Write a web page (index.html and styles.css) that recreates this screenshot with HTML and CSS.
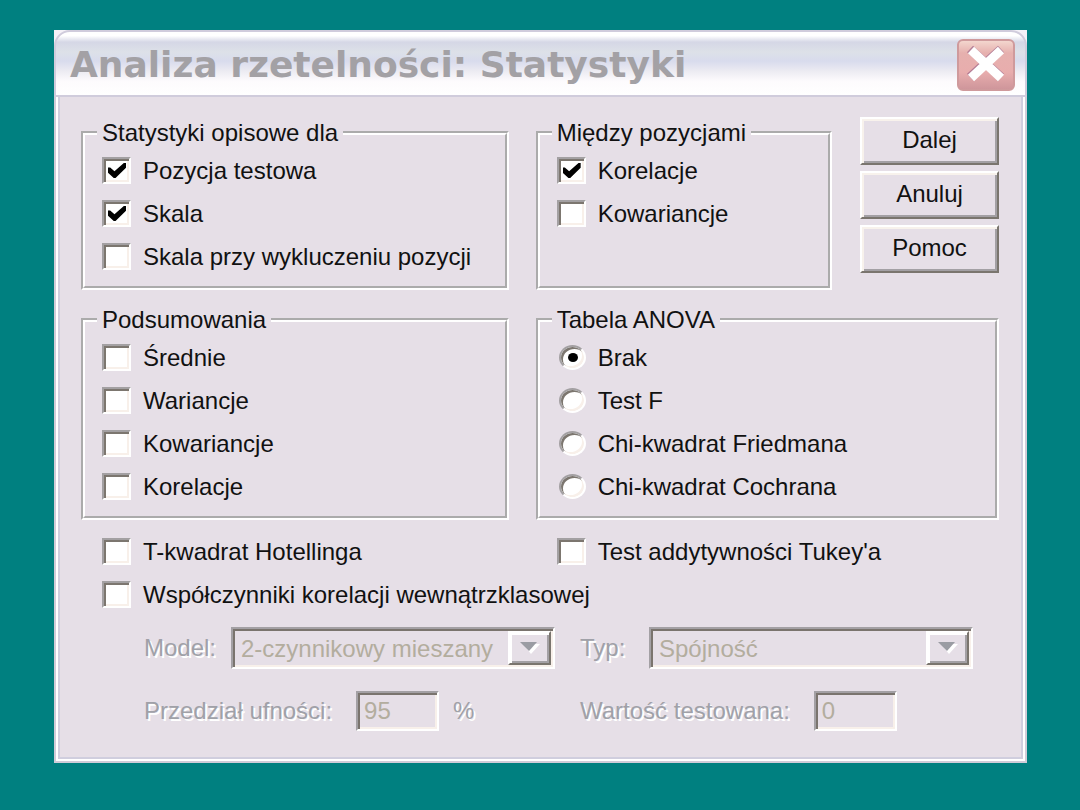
FILE: index.html
```html
<!DOCTYPE html>
<html lang="pl">
<head>
    <meta charset="utf-8">
    <title>Analiza rzetelności: Statystyki</title>
    <link rel="stylesheet" href="styles.css">
</head>
<body>
    <div class="window">
        <div class="titlebar">
            <h1>Analiza rzetelności: Statystyki</h1>
            <button type="button" class="close" aria-label="Zamknij">
                <svg viewBox="0 0 54 48">
                    <path d="M11 8 L42 36 M42 8 L11 36" stroke="#a0688c" stroke-width="9" opacity="0.7"/>
                    <path d="M12 9 L42 37 M42 9 L12 37" stroke="#fff" stroke-width="9"/>
                </svg>
            </button>
        </div>
        <form class="client">
            <div class="groups">
                <fieldset>
                    <legend>Statystyki opisowe dla</legend>
                    <label class="check"><input type="checkbox" checked>Pozycja testowa</label>
                    <label class="check"><input type="checkbox" checked>Skala</label>
                    <label class="check"><input type="checkbox">Skala przy wykluczeniu pozycji</label>
                </fieldset>
                <div class="side">
                    <fieldset>
                        <legend>Między pozycjami</legend>
                        <label class="check"><input type="checkbox" checked>Korelacje</label>
                        <label class="check"><input type="checkbox">Kowariancje</label>
                    </fieldset>
                    <div class="buttons">
                        <button type="button">Dalej</button>
                        <button type="button">Anuluj</button>
                        <button type="button">Pomoc</button>
                    </div>
                </div>
                <fieldset>
                    <legend>Podsumowania</legend>
                    <label class="check"><input type="checkbox">Średnie</label>
                    <label class="check"><input type="checkbox">Wariancje</label>
                    <label class="check"><input type="checkbox">Kowariancje</label>
                    <label class="check"><input type="checkbox">Korelacje</label>
                </fieldset>
                <fieldset>
                    <legend>Tabela ANOVA</legend>
                    <label class="check"><input type="radio" name="anova" checked>Brak</label>
                    <label class="check"><input type="radio" name="anova">Test F</label>
                    <label class="check"><input type="radio" name="anova">Chi-kwadrat Friedmana</label>
                    <label class="check"><input type="radio" name="anova">Chi-kwadrat Cochrana</label>
                </fieldset>
            </div>
            <div class="extra">
                <label class="check"><input type="checkbox">T-kwadrat Hotellinga</label>
                <label class="check"><input type="checkbox">Test addytywności Tukey'a</label>
                <label class="check wide"><input type="checkbox">Współczynniki korelacji wewnątrzklasowej</label>
            </div>
            <div class="icc">
                <div class="field">
                    <label for="model">Model:</label>
                    <div class="combo">
                        <select id="model" disabled><option>2-czynnikowy mieszany</option></select>
                        <span class="arrow"><svg viewBox="0 0 20 12"><path d="M3 2h17l-9 10z" fill="#fff"/><path d="M0 0h17l-8 9z" fill="#9a9ca3"/></svg></span>
                    </div>
                </div>
                <div class="field">
                    <label for="type">Typ:</label>
                    <div class="combo">
                        <select id="type" disabled><option>Spójność</option></select>
                        <span class="arrow"><svg viewBox="0 0 20 12"><path d="M3 2h17l-9 10z" fill="#fff"/><path d="M0 0h17l-8 9z" fill="#9a9ca3"/></svg></span>
                    </div>
                </div>
                <div class="field">
                    <label for="conf">Przedział ufności:</label>
                    <input type="text" id="conf" value="95" disabled>
                    <span>%</span>
                </div>
                <div class="field">
                    <label for="testval">Wartość testowana:</label>
                    <input type="text" id="testval" value="0" disabled>
                </div>
            </div>
        </form>
    </div>
</body>
</html>
```

FILE: styles.css
```css
* {
    box-sizing: border-box;
}

body {
    margin: 0;
    padding: 30px 53px 30px 54px;
    background: #008080;
    font-family: 'Liberation Sans', Arial, sans-serif;
    font-size: 24px;
    color: #111;
}

button, input, select {
    font: inherit;
    color: inherit;
    margin: 0;
}

.window {
    background: #f4f1f7;
}

.titlebar {
    display: flex;
    align-items: center;
    justify-content: space-between;
    height: 67px;
    padding: 2px 10px 0 14px;
    border: 2px solid #d0ccdc;
    border-radius: 16px 16px 0 0;
    background: linear-gradient(#fff 0%, #fff 6%, #d5d7e6 16%, #dde1e8 32%, #d8dbed 46%, #ecebf2 62%, #fdfbfd 78%, #fff 100%);
}

h1 {
    margin: 0;
    font-family: 'DejaVu Sans', Verdana, sans-serif;
    font-size: 36px;
    font-weight: bold;
    color: #a3a1a5;
    white-space: nowrap;
}

.close {
    width: 58px;
    height: 52px;
    padding: 0;
    border: 2px solid #cf9a9c;
    border-radius: 6px;
    background: linear-gradient(#f3d6ce 0%, #e6b0ae 25%, #e8adad 65%, #cf969b 100%);
}

.close svg {
    display: block;
    width: 100%;
}

.client {
    padding: 20px 26px 30px 25px;
    border: 2px solid #d0ccd8;
    border-top: 0;
    background: #e6dfe7;
    box-shadow: inset 0 -2px #fff, inset 2px 0 #fff, inset -2px 0 #fff, inset 0 -4px #d0cede, inset 4px 0 #d0cede, inset -4px 0 #d0cede;
}

.groups {
    display: grid;
    grid-template-columns: 12fr 13fr;
    gap: 14px 27px;
}

fieldset {
    min-width: 0;
    margin: 0;
    padding: 0 17px 8px;
    border: 4px groove #fff;
}

legend {
    margin-left: -5px;
    padding: 0 5px;
    line-height: 32px;
}

.check {
    display: flex;
    align-items: center;
    gap: 12px;
    height: 43px;
    white-space: nowrap;
}

.check input {
    appearance: none;
    flex: none;
    position: relative;
    width: 29px;
    height: 27px;
    border: 2px solid;
    border-color: #a3a0a2 #fff #fff #a3a0a2;
    background: #fff;
    box-shadow: inset 2px 2px #7c766f, inset -2px -2px #f8f0ea;
}

.check input[type="radio"] {
    width: 27px;
    height: 25px;
    margin-left: 2px;
    border-radius: 50%;
}

.check input:checked::after {
    content: '';
    position: absolute;
    left: 4px;
    top: 4px;
    width: 18px;
    height: 15px;
    background: #000;
    clip-path: polygon(0 30%, 12% 30%, 36% 55%, 88% 0, 100% 0, 100% 32%, 42% 100%, 32% 100%, 0 65%);
}

.check input[type="radio"]:checked::after {
    left: 7px;
    top: 6px;
    width: 10px;
    height: 9px;
    border-radius: 50%;
    clip-path: none;
}

.side {
    display: flex;
    gap: 28px;
}

.side fieldset {
    flex: 1;
}

.buttons {
    display: flex;
    flex-direction: column;
    gap: 6px;
    width: 139px;
}

.buttons button {
    height: 48px;
    padding: 0 0 2px;
    border: 2px solid;
    border-color: #fff #7a756e #7a756e #fff;
    background: #e6dfe7;
    box-shadow: inset 2px 2px #f8f2ec, inset -2px -2px #a3a0a4;
}

.extra {
    display: grid;
    grid-template-columns: 12fr 13fr;
    column-gap: 27px;
    margin-top: 10px;
}

.extra .check {
    padding-left: 21px;
}

.extra .wide {
    grid-column: 1 / -1;
}

.icc {
    display: grid;
    grid-template-columns: 411fr 393fr;
    gap: 22px 25px;
    margin-top: 11px;
    padding: 0 26px 0 63px;
    color: #a0a1a8;
}

.field {
    display: flex;
    align-items: center;
    gap: 14px;
    white-space: nowrap;
}

.field label, .field span {
    text-shadow: 2px 2px #fff;
}

.field input {
    margin-left: 10px;
}

.combo {
    position: relative;
    width: 324px;
    margin-left: auto;
}

.field select, .field input {
    height: 42px;
    border: 2px solid;
    border-color: #a3a0a4 #fff #fff #a3a0a4;
    border-radius: 0;
    background: #e6dfe7;
    box-shadow: inset 2px 2px #7a746e, inset -2px -2px #f8f0ea;
    color: #b3ad9e;
    opacity: 1;
}

.field select {
    appearance: none;
    display: block;
    width: 100%;
    padding: 0 48px 0 8px;
}

.field input {
    width: 83px;
    height: 40px;
    padding: 0 6px;
}

.arrow {
    position: absolute;
    top: 4px;
    right: 4px;
    bottom: 4px;
    width: 43px;
    display: flex;
    align-items: center;
    justify-content: center;
    border: 2px solid;
    border-color: #fff #7a756e #7a756e #fff;
    background: #e6dfe7;
    box-shadow: inset 2px 2px #fff, inset -2px -2px #a3a0a4;
}

.arrow svg {
    width: 20px;
}
```
